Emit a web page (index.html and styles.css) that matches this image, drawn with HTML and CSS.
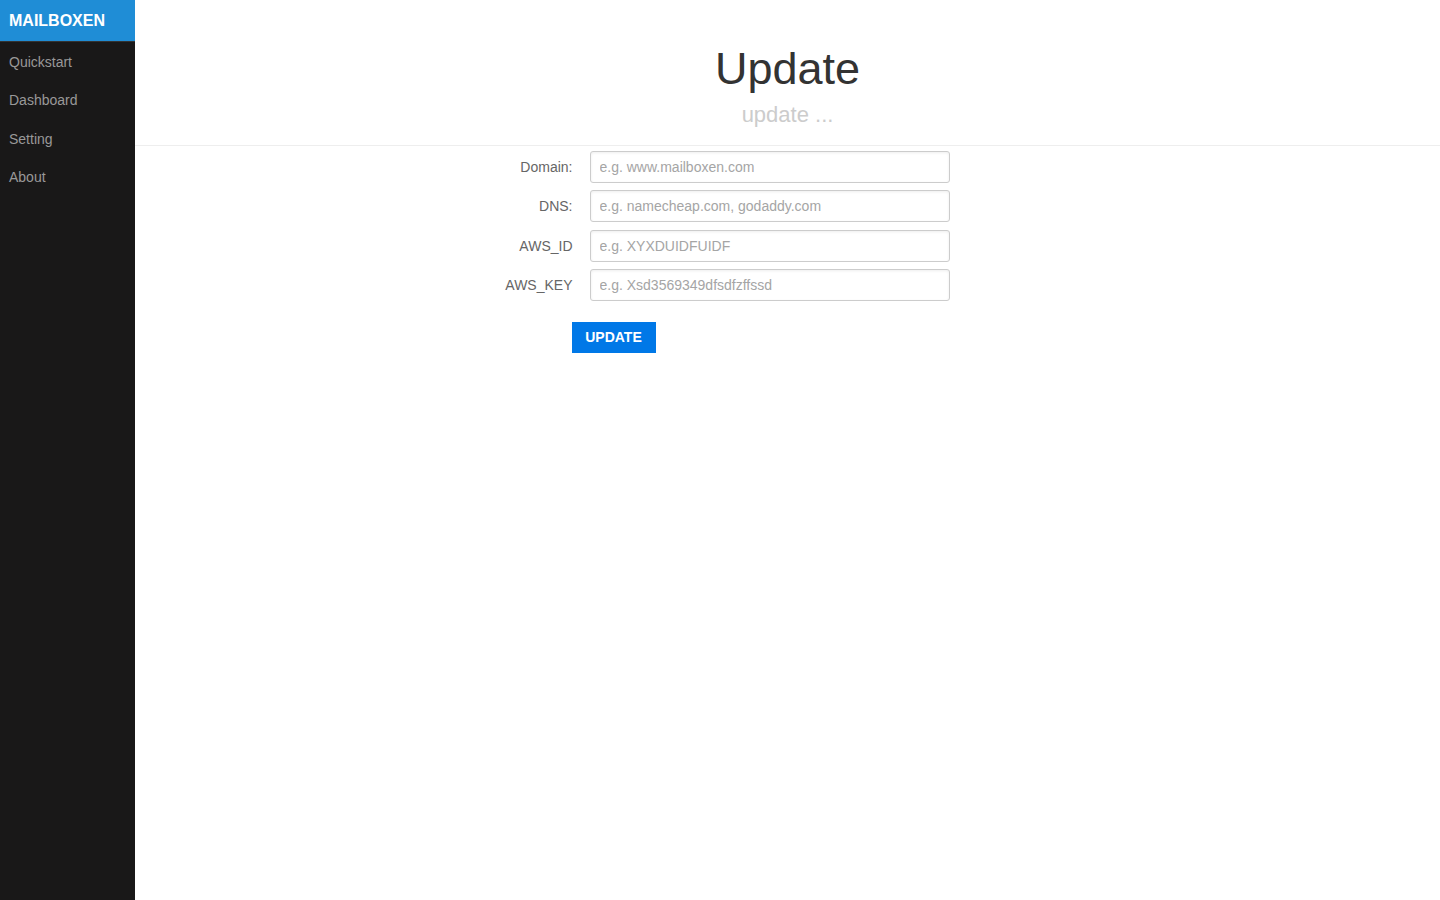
FILE: index.html
```html
<!DOCTYPE html>
<html lang="en">
<head>
  <meta charset="UTF-8" />
  <title>Mailboxen - Update</title>
  <meta name="viewport" content="width=device-width, initial-scale=1.0"/>
  <link rel="stylesheet" href="styles.css">
</head>
<body>
  <div id="layout">
    <div id="menu">
      <a class="brand" href="#">MAILBOXEN</a>
      <ul class="menu-list">
        <li><a href="#">Quickstart</a></li>
        <li><a href="#">Dashboard</a></li>
        <li><a href="#">Setting</a></li>
        <li><a href="#">About</a></li>
      </ul>
    </div>

    <div id="main">
      <div class="header">
        <h1>Update</h1>
        <h2>update ...</h2>
      </div>

      <div class="content">
        <form class="aligned-form">
          <div class="control-group">
            <label for="domain">Domain:</label>
            <input type="text" id="domain" name="domain" placeholder="e.g. www.mailboxen.com" />
          </div>
          <div class="control-group">
            <label for="dns">DNS:</label>
            <input type="text" id="dns" name="dns" placeholder="e.g. namecheap.com, godaddy.com" />
          </div>
          <div class="control-group">
            <label for="aws_id">AWS_ID</label>
            <input type="text" id="aws_id" name="aws_id" placeholder="e.g. XYXDUIDFUIDF" />
          </div>
          <div class="control-group">
            <label for="aws_key">AWS_KEY</label>
            <input type="text" id="aws_key" name="aws_key" placeholder="e.g. Xsd3569349dfsdfzffssd" />
          </div>
          <div class="controls">
            <button type="submit">UPDATE</button>
          </div>
        </form>
      </div>
    </div>
  </div>
</body>
</html>
```

FILE: styles.css
```css
html, body {
  margin: 0;
  padding: 0;
  height: 100%;
}

body {
  font-family: "Liberation Sans", Arial, sans-serif;
  color: #777;
  background: #fff;
}

#layout {
  display: flex;
  min-height: 100%;
}

#menu {
  width: 135px;
  flex-shrink: 0;
  background: #191818;
}

.brand {
  display: block;
  height: 41px;
  line-height: 41px;
  padding: 0 9px;
  background: #1f8dd6;
  border-bottom: 1px solid #333;
  color: #fff;
  font-size: 16px;
  font-weight: bold;
  text-decoration: none;
}

.menu-list {
  list-style: none;
  margin: 0;
  padding: 0;
}

.menu-list a {
  display: block;
  padding: 0 9px;
  height: 38.4px;
  line-height: 40px;
  color: #999;
  font-size: 14px;
  text-decoration: none;
}

#main {
  flex: 1;
}

.header {
  text-align: center;
  color: #333;
  padding: 42px 32px 0;
  height: 103px;
  border-bottom: 1px solid #eee;
}

.header h1 {
  margin: 0;
  font-size: 45px;
  font-weight: 300;
  line-height: 54px;
}

.header h2 {
  margin: 5px 0 0;
  font-size: 22px;
  font-weight: 300;
  line-height: 28px;
  color: #ccc;
}

.content {
  max-width: 736px;
  margin: 0 auto;
  padding: 5px 32px 0;
}

.aligned-form {
  font-size: 14px;
}

.control-group {
  display: flex;
  align-items: center;
  margin-bottom: 7.33px;
}

.control-group label {
  width: 153px;
  margin-right: 17px;
  text-align: right;
  color: #666;
}

.control-group input {
  width: 360px;
  height: 32px;
  box-sizing: border-box;
  padding: 0 9px;
  border: 1px solid #ccc;
  border-radius: 3px;
  box-shadow: inset 0 1px 3px #eee;
  font-family: inherit;
  font-size: 14px;
  color: #555;
}

.control-group input::placeholder {
  color: #a5a5a5;
}

.controls {
  margin: 21px 0 0 152px;
}

button {
  background: #0078e7;
  border: 0;
  color: #fff;
  font-family: inherit;
  font-size: 14px;
  font-weight: bold;
  width: 84px;
  height: 31px;
  padding: 0;
  cursor: pointer;
}
```
